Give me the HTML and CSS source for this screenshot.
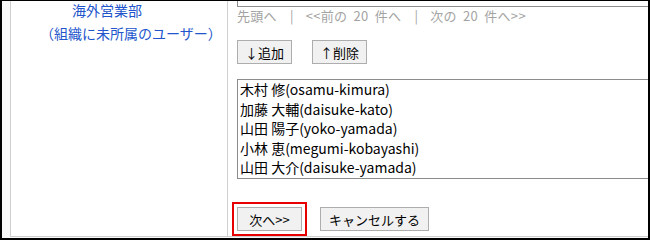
FILE: index.html
```html
<!DOCTYPE html>
<html lang="ja">
<head>
    <meta charset="UTF-8">
    <title>ユーザーの選択</title>
    <link rel="stylesheet" href="styles.css">
</head>
<body>
    <div class="frame">
        <div class="sheet">
            <div class="org-cell">
                <a class="org-name" href="#">海外営業部</a>
                <a class="org-none" href="#">（組織に未所属のユーザー）</a>
            </div>
            <div class="pick-cell">
                <div class="box-tail"></div>
                <div class="pager">
                    <span>先頭へ</span><span class="sep">|</span><span>&lt;&lt;前の 20 件へ</span><span class="sep">|</span><span>次の 20 件へ&gt;&gt;</span>
                </div>
                <div class="move-buttons">
                    <button type="button" class="btn btn-move">↓追加</button>
                    <button type="button" class="btn btn-move">↑削除</button>
                </div>
                <div class="user-list">
                    <div class="user-row">木村 修(osamu-kimura)</div>
                    <div class="user-row">加藤 大輔(daisuke-kato)</div>
                    <div class="user-row">山田 陽子(yoko-yamada)</div>
                    <div class="user-row">小林 恵(megumi-kobayashi)</div>
                    <div class="user-row">山田 大介(daisuke-yamada)</div>
                </div>
                <div class="actions">
                    <button type="button" class="btn btn-next">次へ&gt;&gt;</button>
                    <button type="button" class="btn btn-cancel">キャンセルする</button>
                </div>
            </div>
        </div>
    </div>
</body>
</html>
```

FILE: styles.css
```css
html, body {
    margin: 0;
    padding: 0;
    background-color: #fff;
}
body {
    font-family: "Noto Sans CJK JP", "Noto Sans", sans-serif;
    font-size: 13px;
    color: #000;
}
.frame {
    width: 650px;
    height: 240px;
    box-sizing: border-box;
    border: 2px solid #000;
    border-top-width: 1px;
    background-color: #f8f8f8;
    padding-left: 8px;
    overflow: hidden;
}
.sheet {
    display: flex;
    width: 700px;
    height: 236px;
    box-sizing: border-box;
    background-color: #fff;
    border-left: 1px solid #cfcfcf;
    border-bottom: 1px solid #cfcfcf;
}
.org-cell {
    width: 216px;
    flex-shrink: 0;
    border-right: 1px solid #cfcfcf;
    display: flex;
    flex-direction: column;
    font-size: 14px;
}
.org-cell a {
    color: #2255cc;
    text-decoration: none;
    line-height: 20px;
}
.org-name {
    padding-left: 61px;
    margin-top: -1px;
}
.org-none {
    padding-left: 29px;
    margin-top: 3px;
}
.pick-cell {
    flex: 1;
    padding-left: 9px;
    display: flex;
    flex-direction: column;
}
.box-tail {
    height: 5px;
    border-left: 1px solid #8c8c8c;
    border-bottom: 1px solid #8c8c8c;
}
.pager {
    display: flex;
    color: #a3a3a3;
    line-height: 18px;
    word-spacing: 3px;
    letter-spacing: 0.3px;
    white-space: pre;
}
.pager .sep {
    margin: 0 12px 0 13px;
}
.move-buttons {
    display: flex;
    gap: 20px;
    margin-top: 15px;
}
.btn {
    height: 24px;
    padding: 0 9px;
    font-family: inherit;
    font-size: 13px;
    color: #000;
    background-color: #f1f1f1;
    border: 1px solid #adadad;
    border-radius: 0;
}
.btn-move {
    width: 55px;
    padding: 0;
}
.user-list {
    margin-top: 15px;
    height: 100px;
    box-sizing: border-box;
    border: 1px solid #8c8c8c;
    border-right: none;
    padding: 0 2px;
    font-size: 14px;
    overflow: hidden;
}
.user-row {
    line-height: 19.5px;
    white-space: nowrap;
}
.actions {
    display: flex;
    gap: 18px;
    margin-top: 28px;
}
.btn-next {
    width: 65px;
    padding: 0;
    outline: 2px solid #e60000;
    outline-offset: 3px;
}
.btn-cancel {
    width: 109px;
    padding: 0;
}
```
